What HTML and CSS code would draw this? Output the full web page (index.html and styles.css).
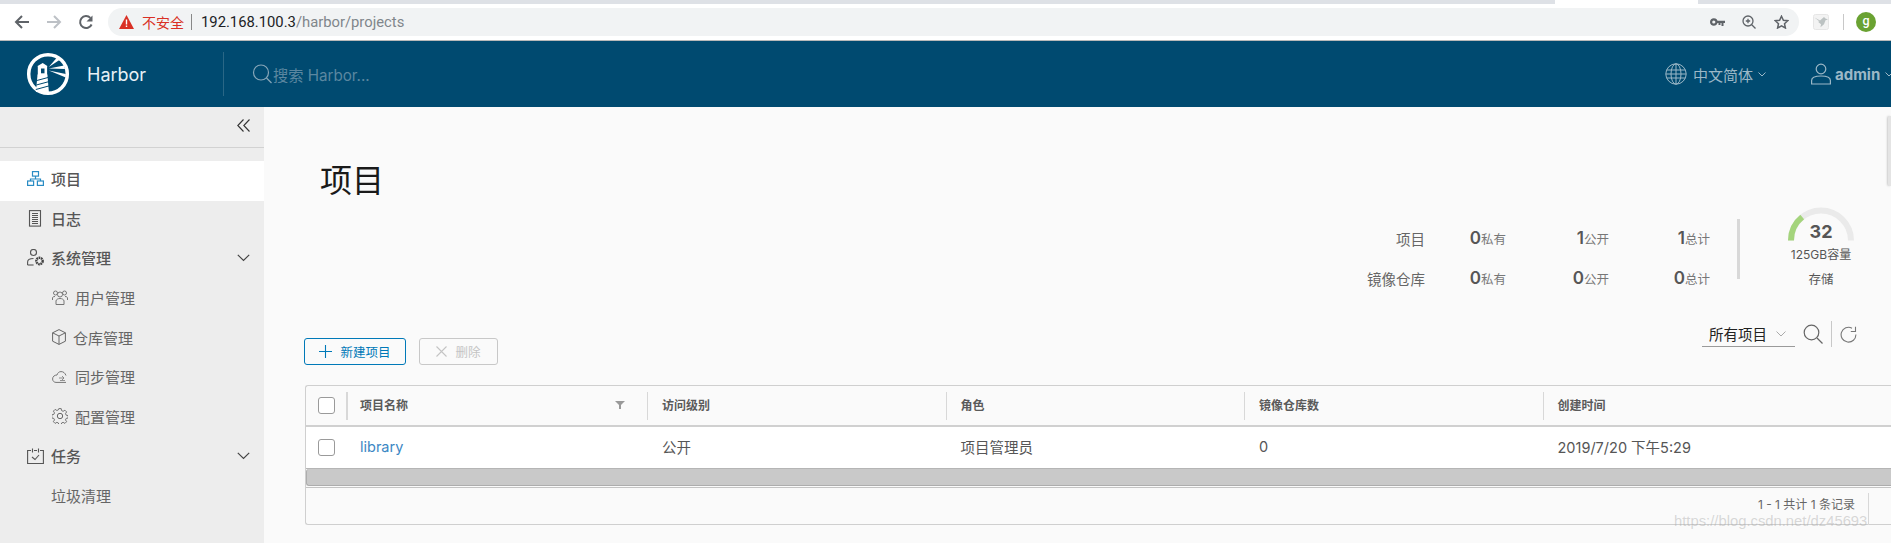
FILE: index.html
```html
<!DOCTYPE html>
<html lang="zh-CN">
<head>
<meta charset="utf-8">
<title>Harbor</title>
<link rel="stylesheet" href="styles.css">
</head>
<body>
<div class="tabstrip"><div class="tab-active"></div></div>
<div class="toolbar">
  <svg class="nav-ic" width="16" height="16" viewBox="0 0 16 16"><path d="M15 8H2M8 2L2 8l6 6" fill="none" stroke="#5f6368" stroke-width="2"/></svg>
  <svg class="nav-ic" width="16" height="16" viewBox="0 0 16 16"><path d="M1 8h13M8 2l6 6-6 6" fill="none" stroke="#bdc1c6" stroke-width="2"/></svg>
  <svg class="nav-ic" width="16" height="16" viewBox="0 0 16 16"><path d="M13.6 10.5A6 6 0 1 1 12.4 3.9" fill="none" stroke="#5f6368" stroke-width="2"/><path d="M14.5 1.5v6h-6z" fill="#5f6368"/></svg>
  <div class="omnibox">
    <svg class="warn" width="15" height="14" viewBox="0 0 15 14"><path d="M7.5 0L15 14H0z" fill="#d93025"/><path d="M6.8 4.5h1.4v5H6.800zM6.800 10.500h1.400v1.500H6.800z" fill="#fff"/></svg>
    <span class="insecure">不安全</span>
    <span class="url-sep"></span>
    <span class="url"><span class="url-host">192.168.100.3</span>/harbor/projects</span>
    <svg class="omni-key" width="15" height="9" viewBox="0 0 15 9"><circle cx="3.800" cy="4" r="2.700" fill="none" stroke="#5f6368" stroke-width="2.200"/><path d="M6 2.700h9v2.300h-1.500v3h-2v-3h-1v2H8.500V5H6z" fill="#5f6368"/></svg>
    <svg class="omni-zoom" width="14" height="14" viewBox="0 0 14 14"><circle cx="6" cy="6" r="5" fill="none" stroke="#5f6368" stroke-width="1.300"/><path d="M9.500 9.500L13.500 13.500M3.800 6h4.400M6 3.800v4.400" stroke="#5f6368" stroke-width="1.300"/></svg>
    <svg class="omni-star" width="15" height="14" viewBox="0 0 15 14"><path d="M7.500 1.200l1.900 4 4.400.5-3.300 3 .9 4.300-3.900-2.200L3.600 13l.9-4.300-3.300-3 4.400-.5z" fill="none" stroke="#5f6368" stroke-width="1.500"/></svg>
  </div>
  <div class="ext-box"><svg width="16" height="16" viewBox="0 0 16 16"><rect x=".5" y=".5" width="15" height="15" rx="2" fill="#f3f3f3" stroke="#e6e6e6"/><path d="M1.500 3.500L7 6.500l4-3.500 1.500 1.500L15 5.500l-2.500.8-1.500 4-3.500 3 .5-3-3-2.500 1.500-.3z" fill="#bcc2c2"/></svg></div>
  <span class="tool-sep"></span>
  <span class="avatar">g</span>
</div>

<header class="app-header">
  <div class="brand">
    <svg class="logo" width="44" height="44" viewBox="0 0 44 44">
      <circle cx="22" cy="22" r="19.300" fill="none" stroke="#fff" stroke-width="3.500"/>
      <path d="M16.700 11l5 3.200h-.6v8.300h.4v1.500l1.400 16h-13l1.500-16v-1.500h.4v-8.300h-.6z" fill="#fff"/>
      <path d="M10.800 28.500l12-3.200M10.300 33l13-3.500M9.800 37.500l14-3.800" stroke="#004a70" stroke-width="1"/>
      <rect x="15" y="16.500" width="3.500" height="4.800" fill="#004a70"/>
      <path d="M22.800 15L31 5.500l2.800 2.200zM22.800 16.500L38 13.500l1 3.500zM22.800 18.500l17 3.500v3.500z" fill="#fff"/>
    </svg>
    <span class="brand-name">Harbor</span>
  </div>
  <div class="header-search">
    <svg width="21" height="20" viewBox="0 0 21 20"><circle cx="9" cy="8.500" r="7.500" fill="none" stroke="#86a6b8" stroke-width="1.200"/><path d="M14.500 14l5 5" stroke="#86a6b8" stroke-width="1.200"/></svg>
    <span class="search-text">搜索 Harbor...</span>
  </div>
  <div class="header-right">
    <svg class="globe" width="22" height="22" viewBox="0 0 22 22"><g fill="none" stroke="#9cb8c7" stroke-width="1"><circle cx="11" cy="11" r="10.200"/><ellipse cx="11" cy="11" rx="5" ry="10.200"/><path d="M11 1v20M1.800 7h18.400M1.800 15h18.400M1 11h20"/></g></svg>
    <span class="lang">中文简体</span>
    <svg class="caret" width="8" height="5" viewBox="0 0 8 5"><path d="M.5.500L4 4 7.500.500" fill="none" stroke="#9cb8c7"/></svg>
    <svg class="user-ic" width="20" height="22" viewBox="0 0 20 22"><g fill="none" stroke="#9cb8c7" stroke-width="1.200"><circle cx="10" cy="6" r="4.800"/><path d="M.600 21v-3.500c0-3 4-4.500 9.400-4.500s9.400 1.500 9.400 4.500V21z"/></g></svg>
    <span class="admin">admin</span>
    <svg class="caret" width="8" height="5" viewBox="0 0 8 5"><path d="M.5.500L4 4 7.500.500" fill="none" stroke="#9cb8c7"/></svg>
  </div>
</header>

<div class="app-body">
  <aside class="sidebar">
    <div class="collapse-row"><svg width="13" height="13" viewBox="0 0 13 13"><path d="M6.500.5L.8 6.500l5.700 6M12.500.5L6.800 6.500l5.700 6" fill="none" stroke="#333" stroke-width="1.100"/></svg></div>
    <nav class="nav">
      <a class="nav-item top active">
        <svg class="nav-icon" width="17" height="15" viewBox="0 0 17 15"><g fill="none" stroke="#2a8cc4" stroke-width="1.200"><rect x="5.500" y=".6" width="6" height="4.500"/><rect x=".6" y="10" width="6" height="4.400"/><rect x="10.400" y="10" width="6" height="4.400"/><path d="M8.500 5v3M3.500 10V8h10v2"/></g></svg>
        <span>项目</span>
      </a>
      <a class="nav-item top">
        <svg class="nav-icon" width="17" height="17" viewBox="0 0 17 17"><g fill="none" stroke="#555" stroke-width="1.100"><rect x="2.500" y=".6" width="11" height="15.500"/><path d="M5 3.500h6M5 5.500h6M5 7.500h6M5 9.500h6M5 11.500h6M5 13.500h6"/></g></svg>
        <span>日志</span>
      </a>
      <a class="nav-item top">
        <svg class="nav-icon" width="17" height="17" viewBox="0 0 17 17"><g fill="none" stroke="#555" stroke-width="1.100"><circle cx="6.500" cy="3.500" r="3"/><path d="M.6 16v-3c0-2 2.500-3.500 5.900-3.500"/><path d="M.6 16h6"/></g><circle cx="12.500" cy="12" r="3.200" fill="none" stroke="#444" stroke-width="2.400" stroke-dasharray="1.700 .6"/></svg>
        <span>系统管理</span>
        <svg class="chev" width="13" height="8" viewBox="0 0 13 8"><path d="M.8.800L6.500 6.500 12.200.800" fill="none" stroke="#444" stroke-width="1.200"/></svg>
      </a>
      <a class="nav-item sub">
        <svg class="nav-icon" width="16" height="15" viewBox="0 0 16 15"><g fill="none" stroke="#777" stroke-width="1"><circle cx="8" cy="4.500" r="2.500"/><path d="M4 14.500v-3.500c0-1.500 2-2.500 4-2.500s4 1 4 2.500v3.500z"/><circle cx="3.500" cy="3" r="2"/><circle cx="12.500" cy="3" r="2"/><path d="M.5 10V8c0-1 1-1.500 2.500-1.500M15.500 10V8c0-1-1-1.500-2.500-1.500"/></g></svg>
        <span>用户管理</span>
      </a>
      <a class="nav-item sub">
        <svg class="nav-icon" width="14" height="16" viewBox="0 0 14 16"><path d="M7 .6l6.400 3.200v8.400L7 15.400.6 12.200V3.800zM.6 3.800L7 7l6.400-3.200M7 7v8.400" fill="none" stroke="#666" stroke-width="1"/></svg>
        <span>仓库管理</span>
      </a>
      <a class="nav-item sub">
        <svg class="nav-icon" width="16" height="12" viewBox="0 0 16 12"><path d="M14 4.500C13 2 11.500.6 9 .6 7 .6 5.500 2 5 4 2.500 4 .6 5.500.6 8c0 2 1.500 3.400 3.400 3.400h10" fill="none" stroke="#777"/><path d="M7 7h5M10 5l2 2-2 2M8 9.500h5" fill="none" stroke="#777" stroke-width=".8"/></svg>
        <span>同步管理</span>
      </a>
      <a class="nav-item sub">
        <svg class="nav-icon" width="16" height="16" viewBox="0 0 16 16"><circle cx="8" cy="8" r="2.700" fill="none" stroke="#666"/><path d="M6.800.6h2.400l.4 2 1.500.7 1.800-1.100 1.700 1.700-1.100 1.800.7 1.500 2 .4v2.400l-2 .4-.7 1.500 1.100 1.800-1.700 1.700-1.800-1.100-1.500.7-.4 2H6.800l-.4-2-1.500-.7-1.800 1.100-1.700-1.700 1.100-1.800-.7-1.500-2-.4V6.800l2-.4.7-1.500-1.100-1.800 1.700-1.700 1.800 1.100 1.500-.7z" fill="none" stroke="#666" stroke-width=".9"/></svg>
        <span>配置管理</span>
      </a>
      <a class="nav-item top">
        <svg class="nav-icon" width="17" height="16" viewBox="0 0 17 16"><g fill="none" stroke="#555" stroke-width="1.100"><path d="M4 2.500H.6v13h15.800v-13H13M7 2.500h3"/><path d="M5.500.5v4M11.500.5v4"/><path d="M5 9l3 2.500 4-4.500"/></g></svg>
        <span>任务</span>
        <svg class="chev" width="13" height="8" viewBox="0 0 13 8"><path d="M.8.800L6.500 6.500 12.200.800" fill="none" stroke="#444" stroke-width="1.200"/></svg>
      </a>
      <a class="nav-item plain"><span>垃圾清理</span></a>
    </nav>
  </aside>

  <main class="content">
    <h1 class="page-title">项目</h1>
    <section class="summary">
      <div class="stats">
        <span class="stat-label">项目</span>
        <span class="stat"><b>0</b>私有</span>
        <span class="stat"><b>1</b>公开</span>
        <span class="stat"><b>1</b>总计</span>
        <span class="stat-label">镜像仓库</span>
        <span class="stat"><b>0</b>私有</span>
        <span class="stat"><b>0</b>公开</span>
        <span class="stat"><b>0</b>总计</span>
      </div>
      <div class="summary-sep"></div>
      <div class="gauge">
        <svg class="gauge-arc" width="66" height="34" viewBox="0 0 66 34"><path d="M3 33.500a30 30 0 0 1 60 0" fill="none" stroke="#eaeaea" stroke-width="6"/><path d="M3 33.500A30 30 0 0 1 14.200 10" fill="none" stroke="#a4d47c" stroke-width="6"/></svg>
        <span class="gauge-num">32</span>
        <span class="gauge-cap">125GB容量</span>
        <span class="gauge-name">存储</span>
      </div>
    </section>

    <section class="actions">
      <button class="btn primary"><svg width="13" height="13" viewBox="0 0 13 13"><path d="M6.500 0v13M0 6.500h13" stroke="#0079b8" stroke-width="1.100"/></svg><span>新建项目</span></button>
      <button class="btn disabled"><svg width="11" height="11" viewBox="0 0 11 11"><path d="M.5.500l10 10M10.500.500l-10 10" stroke="#c4c4c4" stroke-width="1.100"/></svg><span>删除</span></button>
      <div class="filter-tools">
        <div class="select"><span>所有项目</span><svg width="10" height="6" viewBox="0 0 10 6"><path d="M.5.500L5 5 9.500.500" fill="none" stroke="#aaa"/></svg></div>
        <svg class="tool-search" width="20" height="20" viewBox="0 0 20 20"><circle cx="8.500" cy="8.500" r="7.300" fill="none" stroke="#666" stroke-width="1.200"/><path d="M14 14l5.500 5.500" stroke="#666" stroke-width="1.200"/></svg>
        <span class="filter-sep"></span>
        <svg class="tool-refresh" width="17" height="17" viewBox="0 0 17 17"><path d="M12 2.200A7.400 7.400 0 1 0 15.900 8.500" fill="none" stroke="#777" stroke-width="1.100"/><path d="M15.500.8v4.700h-4.700" fill="none" stroke="#777" stroke-width="1.100"/></svg>
      </div>
    </section>

    <section class="grid">
      <div class="row head">
        <div class="cell check"><span class="box"></span></div>
        <div class="cell name"><span>项目名称</span><svg class="funnel" width="10" height="8" viewBox="0 0 10 8"><path d="M0 0h10L6 4v4H4V4z" fill="#999"/></svg></div>
        <div class="cell col">访问级别</div>
        <div class="cell col">角色</div>
        <div class="cell col">镜像仓库数</div>
        <div class="cell col">创建时间</div>
      </div>
      <div class="row body-row">
        <div class="cell check"><span class="box"></span></div>
        <div class="cell name link">library</div>
        <div class="cell col">公开</div>
        <div class="cell col">项目管理员</div>
        <div class="cell col">0</div>
        <div class="cell col">2019/7/20 下午5:29</div>
      </div>
      <div class="hscroll"><div class="hthumb"></div></div>
      <div class="grid-foot"><span class="count">1 - 1 共计 1 条记录</span><span class="foot-sep"></span></div>
    </section>
  </main>
</div>
<div class="page-scroll"></div>
<div class="watermark">https://blog.csdn.net/dz45693</div>
</body>
</html>
```

FILE: styles.css
```css
* { box-sizing: border-box; }
html, body { margin: 0; padding: 0; height: 543px; overflow: hidden; }
body { font-family: Inter, "Noto Sans CJK SC", sans-serif; color: #565656; background: #fafafa; position: relative; width: 1891px; }
svg { display: block; flex: none; }

.tabstrip { height: 4px; background: #dee1e6; padding-left: 1555px; }
.tab-active { width: 143px; height: 4px; background: #fff; }
.toolbar { height: 37px; background: #fff; border-bottom: 1px solid #b9b9b9; display: flex; align-items: center; padding-left: 14px; }
.nav-ic { margin-right: 16px; }
.omnibox { width: 1691px; height: 28px; margin-left: -2px; border-radius: 14px; background: #f1f3f4; display: flex; align-items: center; padding-left: 11px; }
.warn { margin-right: 8px; }
.insecure { font: 14px "Noto Sans CJK SC", sans-serif; color: #d93025; width: 42px; white-space: nowrap; }
.url-sep { width: 1px; height: 16px; background: #888; margin: 0 9px 0 7px; }
.url { font: 14.800px Roboto, sans-serif; color: #80868b; white-space: nowrap; width: 1509px; }
.url-host { color: #202124; }
.omni-zoom { margin-left: 17px; }
.omni-star { margin-left: 18px; }
.ext-box { margin-left: 14px; }
.tool-sep { width: 1px; height: 16px; background: #c8c8c8; margin: 0 12px 0 14px; }
.avatar { width: 20px; height: 20px; border-radius: 50%; background: #6aa232; color: #fff; font: 500 12.500px/18px Roboto, sans-serif; text-align: center; }

.app-header { height: 66px; background: #004a70; display: flex; align-items: center; }
.brand { width: 224px; height: 44px; border-right: 1px solid #2a6786; display: flex; align-items: center; padding-left: 26px; flex: none; }
.brand-name { color: #e8f1f6; font-size: 18px; margin-left: 17px; }
.header-search { display: flex; align-items: center; margin-left: 28px; }
.search-text { color: #5b87a0; font: 15.200px Inter, "Noto Sans CJK SC", sans-serif; }
.header-right { margin-left: auto; display: flex; align-items: center; color: #9cb8c7; width: 226px; flex: none; height: 100%; }
.lang { font-size: 15px; margin-left: 6px; white-space: nowrap; }
.caret { margin-left: 5px; }
.user-ic { margin-left: 45px; }
.admin { font-size: 15px; font-weight: 700; margin-left: 4px; }

.app-body { display: flex; height: 436px; }
.sidebar { width: 264px; background: #ededed; flex: none; }
.collapse-row { height: 41px; border-bottom: 1px solid #d2d2d2; display: flex; align-items: center; justify-content: flex-end; padding-right: 14px; padding-bottom: 3px; }
.nav { padding-top: 13px; }
.nav-item { height: 39.600px; padding-bottom: 4px; display: flex; align-items: center; font-size: 15px; color: #565656; white-space: nowrap; }
.nav-item.active { background: #fff; }
.nav-item.top { font-weight: 500; padding-left: 27px; }
.nav-item.top .nav-icon { margin-right: 7px; }
.nav-item.sub { padding-left: 52px; color: #666; }
.nav-item.sub .nav-icon { margin-right: 7px; }
.nav-item.plain { padding-left: 51px; color: #666; }
.chev { margin-left: auto; margin-right: 14px; }

.content { flex: 1; min-width: 0; padding-left: 41px; overflow: hidden; }
.page-title { margin: 0; height: 100px; padding: 49px 0 0 15px; font-size: 32px; line-height: 50px; font-weight: 400; color: #1a1a1a; }
.summary { display: flex; justify-content: flex-end; padding-right: 37px; height: 114px; }
.stats { display: grid; grid-template-columns: 121px 81px 103px 101px; grid-auto-rows: 40px; margin-top: 12px; height: 80px; }
.stat-label { font-size: 14.500px; color: #666; text-align: right; line-height: 41px; }
.stat { font-size: 12.500px; text-align: right; color: #777; line-height: 38px; }
.stat b { font-size: 17px; font-weight: 600; color: #565656; }
.summary-sep { width: 3px; height: 60px; background: #d8d8d8; margin: 12px 48px 0 27px; }
.gauge { width: 66px; display: flex; flex-direction: column; align-items: center; position: relative; }
.gauge-arc { margin-bottom: -20px; }
.gauge-num { font-size: 18px; font-weight: 700; line-height: 22px; color: #565656; }
.gauge-cap { font: 12px/16px Inter, "Noto Sans CJK SC", sans-serif; margin-top: 4px; white-space: nowrap; }
.gauge-name { font-size: 12.500px; line-height: 16px; margin-top: 9px; }

.actions { display: flex; align-items: flex-start; height: 64px; }
.btn { height: 27px; margin-top: 17px; padding: 0 0 1px; background: transparent; border-radius: 3px; font: 12.500px Inter, "Noto Sans CJK SC", sans-serif; display: flex; align-items: center; justify-content: center; gap: 8px; }
.btn.primary { width: 102px; border: 1px solid #0079b8; color: #0079b8; margin-left: -1px; }
.btn.disabled { width: 79px; border: 1px solid #c8c8c8; color: #c4c4c4; margin-left: 13px; }
.filter-tools { margin-left: auto; display: flex; align-items: center; padding-right: 34px; height: 26px; }
.select { width: 93px; height: 26px; border-bottom: 1px solid #9a9a9a; display: flex; align-items: center; padding-left: 7px; font-size: 14.500px; color: #222; gap: 9px; white-space: nowrap; }
.tool-search { margin-left: 8px; }
.filter-sep { width: 1px; height: 26px; background: #c8c8c8; margin: 0 8px 0 8px; }

.grid { border: 1px solid #cfcfcf; border-right: 0; border-radius: 3px 0 0 3px; height: 140px; width: 1600px; background: #fafafa; }
.row { display: flex; }
.row.head { height: 41px; border-bottom: 2px solid #d0d0d0; font-size: 12px; font-weight: 700; color: #5a5a5a; align-items: center; }
.row.body-row { height: 41px; background: #fff; font-size: 14.500px; color: #565656; align-items: center; }
.cell { height: 28px; display: flex; align-items: center; flex: none; padding-bottom: 2px; }
.check { width: 42px; padding-left: 12px; padding-bottom: 0; }
.box { width: 17px; height: 17px; border: 1px solid #9a9a9a; border-radius: 3px; background: #fff; }
.head .check { border-right: 2px solid #d8d8d8; }
.name { width: 300px; padding-left: 12px; padding-right: 22px; justify-content: space-between; }
.head .name { border-right: 1px solid #d8d8d8; }
.col { width: 298.500px; padding-left: 14px; white-space: nowrap; }
.head .col { border-right: 1px solid #d8d8d8; }
.head .col:last-child { border-right: 0; }
.link { color: #3b87c4; }
.hscroll { height: 20px; background: #fafafa; border-top: 1px solid #b5b5b5; border-bottom: 1px solid #c4c4c4; }
.hthumb { height: 17px; background: #c9c9c9; border: 1px solid #adadad; border-right: 0; border-top: 0; border-radius: 3px 0 0 3px; }
.grid-foot { height: 37px; display: flex; justify-content: flex-end; align-items: flex-start; padding-right: 36px; font-size: 12px; color: #666; }
.count { line-height: 34px; margin-right: 13px; white-space: nowrap; }
.foot-sep { width: 1px; height: 32px; margin-top: 5px; background: #d8d8d8; }

.page-scroll { position: absolute; left: 1888px; top: 116px; width: 3px; height: 70px; background: #e4e4e4; box-shadow: -1px 0 2px #ccc; border-radius: 2px 0 0 2px; }
.watermark { position: absolute; left: 1674px; top: 513px; font: 14.800px "Liberation Sans", sans-serif; color: rgba(170,170,170,.45); white-space: nowrap; }
```
